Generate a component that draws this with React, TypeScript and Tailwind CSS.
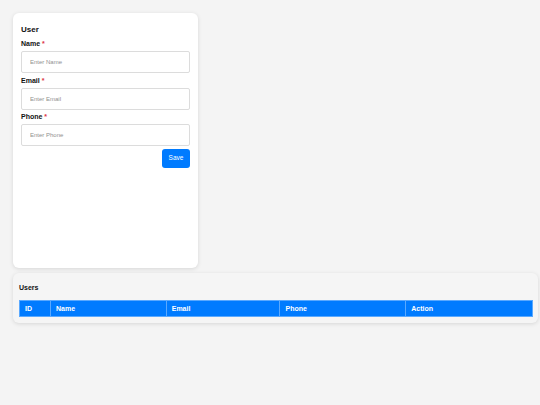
export default function App() {
  const fields = [
    { label: 'Name', placeholder: 'Enter Name' },
    { label: 'Email', placeholder: 'Enter Email' },
    { label: 'Phone', placeholder: 'Enter Phone' },
  ];
  const columns = [
    { title: 'ID', w: 'w-[31px]' },
    { title: 'Name', w: 'w-[116px]' },
    { title: 'Email', w: 'w-[114px]' },
    { title: 'Phone', w: 'w-[126px]' },
    { title: 'Action', w: 'w-[127px]' },
  ];

  return (
    <div
      className="min-h-[405px] w-[540px] bg-[#f4f4f4] pl-[13px] pt-[13px] text-[#111]"
      style={{ fontFamily: '"Liberation Sans", Arial, sans-serif' }}
    >
      {/* form card */}
      <div className="h-[255px] w-[185px] rounded-[6px] bg-white px-[8px] pt-[12px] shadow-[0_1px_4px_rgba(0,0,0,0.12)]">
        <h2 className="mb-[4px] text-[8px] font-bold leading-[10px]">User</h2>
        <form onSubmit={(e) => e.preventDefault()}>
          {fields.map((f) => (
            <div key={f.label} className="mb-[2.5px]">
              <label className="mb-[3px] block text-[7px] font-bold leading-[9px]">
                {f.label} <span className="text-[#dc3545]">*</span>
              </label>
              <input
                placeholder={f.placeholder}
                className="block h-[22px] w-full rounded-[2px] border border-[#dcdcdc] bg-white px-[8px] text-[6px] outline-none placeholder:text-[#8f8f8f]"
              />
            </div>
          ))}
          <div className="mt-[3px] flex justify-end">
            <button
              type="submit"
              className="h-[19px] w-[28px] rounded-[3px] bg-[#007bff] text-[6.5px] leading-none text-white"
            >
              Save
            </button>
          </div>
        </form>
      </div>

      {/* users table card */}
      <div className="mt-[5px] w-[525px] rounded-[6px] bg-[#f5f5f5] pb-[6px] pl-[6px] pr-[5px] pt-[10px] shadow-[0_1px_4px_rgba(0,0,0,0.12)]">
        <h2 className="mb-[8px] text-[7px] font-bold leading-[9px]">Users</h2>
        <table className="w-[514px] border-collapse">
          <thead>
            <tr className="bg-[#007bff]">
              {columns.map((c) => (
                <th
                  key={c.title}
                  className={`${c.w} h-[16px] border border-[#5aa9ff] px-[5px] text-left text-[7px] font-bold leading-none text-white`}
                >
                  {c.title}
                </th>
              ))}
            </tr>
          </thead>
          <tbody />
        </table>
      </div>
    </div>
  );
}
